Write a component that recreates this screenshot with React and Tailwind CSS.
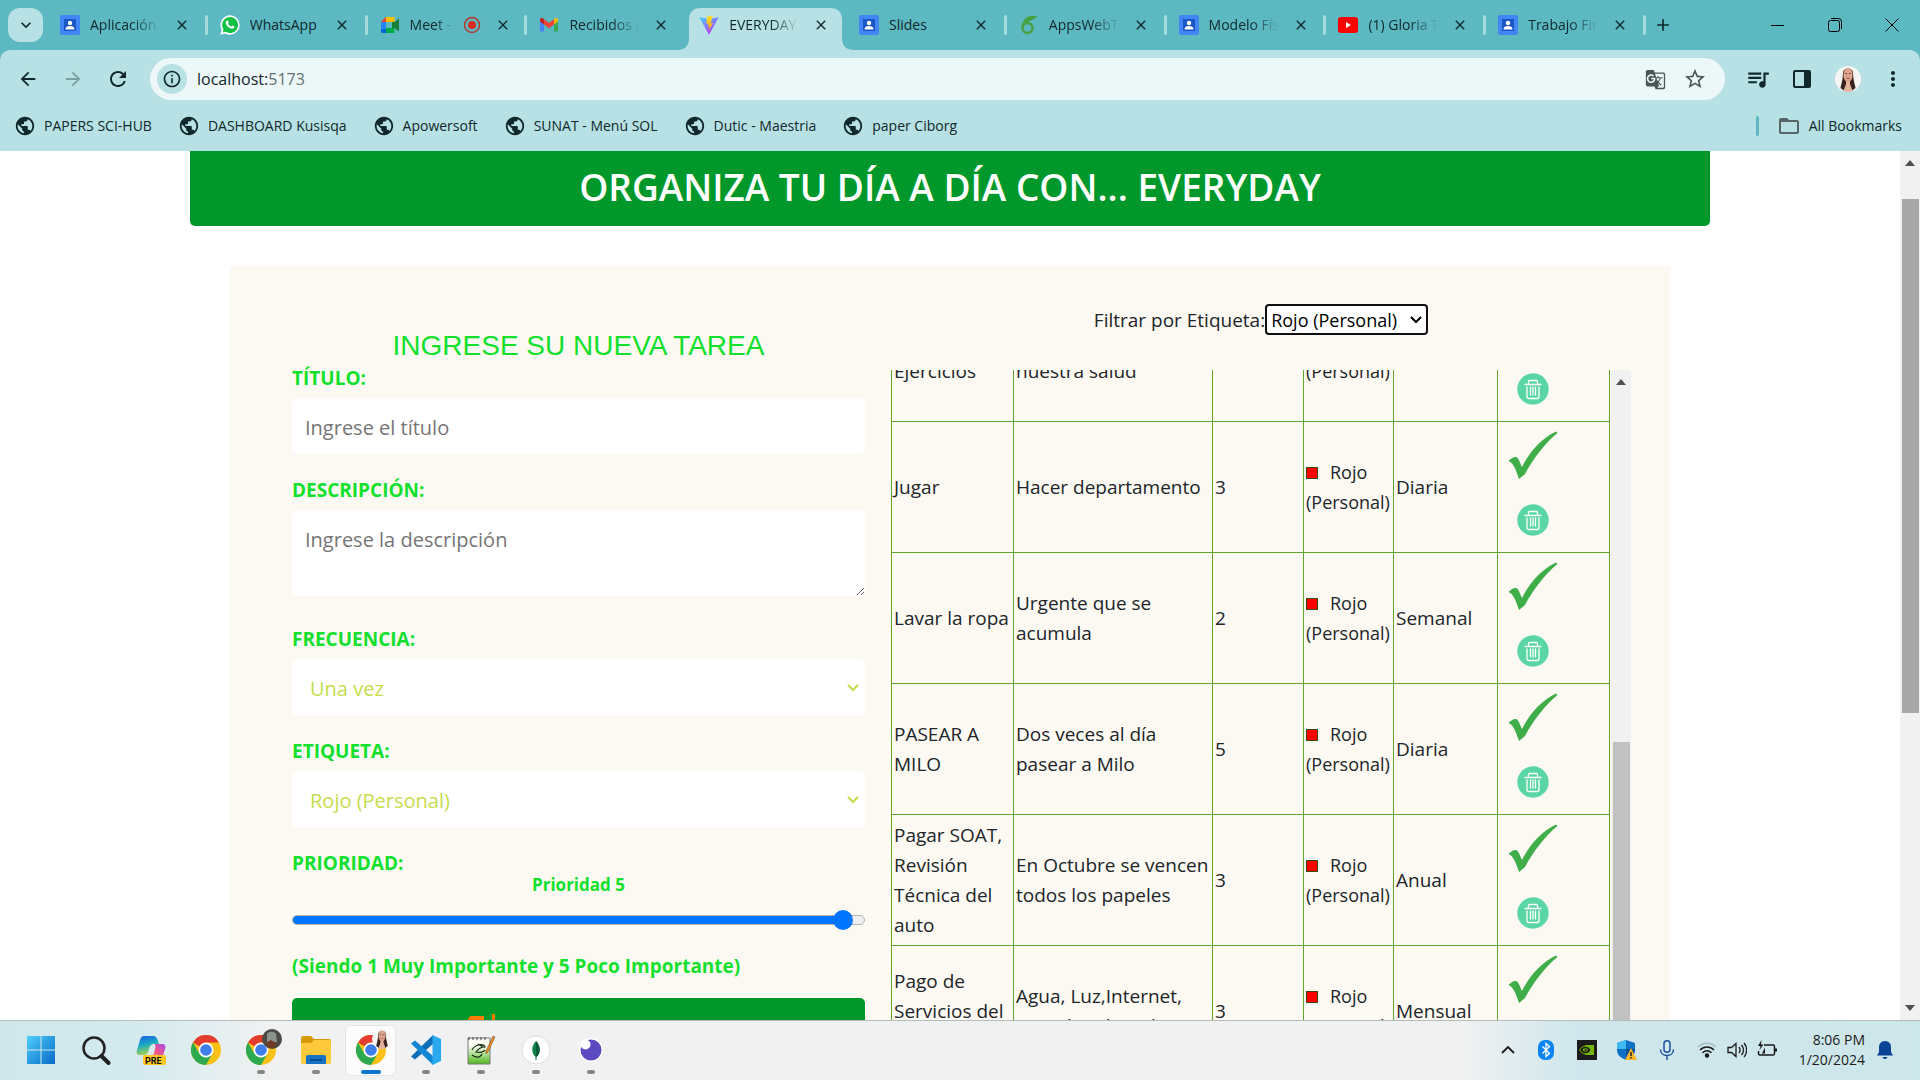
import React, { useEffect, useRef } from "react";
import {
  MdPublic, MdArrowBack, MdArrowForward, MdRefresh, MdInfoOutline, MdStarBorder,
  MdQueueMusic, MdGTranslate, MdMoreVert, MdFolderOpen, MdClose, MdAdd, MdExpandMore,
} from "react-icons/md";

const ICON = "block shrink-0";

function PersonIcon() {
  return (
    <svg viewBox="0 0 20 20" className={ICON + " size-5"}>
      <rect width="20" height="20" rx="2" fill="#4285f4" />
      <rect x="4" y="4" width="12" height="12" fill="#1a56c4" />
      <circle cx="10" cy="8" r="2.2" fill="#fff" />
      <path d="M5.5 14.5c0-2.4 2-3.4 4.5-3.4s4.5 1 4.5 3.4z" fill="#fff" />
    </svg>
  );
}

function WhatsIcon() {
  return (
    <svg viewBox="0 0 20 20" className={ICON + " size-5"}>
      <path d="M10 0.3a9.7 9.7 0 0 1 0 19.4c-1.700 0-3.200-.4-4.600-1.200L.3 19.800l1.400-5A9.700 9.700 0 0 1 10 .3z" fill="#fff" />
      <path d="M10 2a8 8 0 1 1-4.200 14.800L2.700 17.600l.9-3A8 8 0 0 1 10 2z" fill="#12c143" />
      <path d="M7.100 5.500c.4-.2.900 0 1 .4l.7 1.500c.1.300-.6 1.100-.6 1.300.6 1.300 1.700 2.300 3 2.800.3.100 1-1 1.300-.9l1.700.8c.4.3 0 1.500-.6 1.900-1.800 1.200-4.300-.1-5.700-1.500S5.200 8.300 5.800 6.800c.3-.7.800-1.200 1.300-1.300z" fill="#fff" />
    </svg>
  );
}

function MeetIcon() {
  return (
    <svg viewBox="0 0 20 20" className={ICON + " size-5"}>
      <path d="M1 7l5-5v5z" fill="#ea4335" />
      <path d="M6 2h8.500v5H6z" fill="#fbbc04" />
      <path d="M1 7h5v7H1z" fill="#2684fc" />
      <path d="M1 14h5v4H2.500A1.500 1.500 0 0 1 1 16.500z" fill="#0066da" />
      <path d="M6 13h8.500v5H6z" fill="#00ac47" />
      <path d="M12 7h2.500v6H12zM14.500 7L19 3.500v13L14.500 13z" fill="#188038" />
    </svg>
  );
}

function GmailIcon() {
  return (
    <svg viewBox="0 0 20 20" className={ICON + " size-5"}>
      <path d="M1 5v11.500h4V8.500z" fill="#4285f4" />
      <path d="M15 8.500v8h4V5z" fill="#34a853" />
      <path d="M15 4.500v5l4-3V5c0-2-2-2.300-3-1.500z" fill="#fbbc04" />
      <path d="M5 9.500l5 3.800 5-3.800V4.300L10 8 5 4.300z" fill="#ea4335" />
      <path d="M1 5v1.500l4 3V4.300L4 3.500C3 2.700 1 3 1 5z" fill="#c5221f" />
    </svg>
  );
}

function ViteIcon() {
  return (
    <svg viewBox="0 0 20 20" className={ICON + " size-5"}>
      <defs>
        <linearGradient id="viteBody" x1="0" y1="0" x2="0.600" y2="1">
          <stop offset="0" stopColor="#41d1ff" />
          <stop offset="1" stopColor="#bd34fe" />
        </linearGradient>
        <linearGradient id="viteBolt" x1="0" y1="0" x2="0" y2="1">
          <stop offset="0" stopColor="#ffdd35" />
          <stop offset="1" stopColor="#ffa800" />
        </linearGradient>
      </defs>
      <path d="M0.300 2.200L10 4l9.700-1.800L10 19.700z" fill="url(#viteBody)" />
      <path d="M14 .4L8 1.500l-.5 7.600 2.200-.5-.6 3.200 1.400-.4-.8 4.400 4.300-7.800-2.500.5z" fill="url(#viteBolt)" />
    </svg>
  );
}

function OverleafIcon() {
  return (
    <svg viewBox="0 0 20 20" className={ICON + " size-5"} fill="none" stroke="#47a141" strokeWidth="2.400">
      <circle cx="8.500" cy="13" r="5" />
      <path d="M3.500 12C4 6 9 6.500 15.500 2.200 11 1.500 6.500 3.500 5 7" />
    </svg>
  );
}

function YoutubeIcon() {
  return (
    <svg viewBox="0 0 20 20" className={ICON + " size-5"}>
      <rect y="2" width="20" height="16" rx="3" fill="#f00" />
      <path d="M8 7l5 3-5 3z" fill="#fff" />
    </svg>
  );
}

const TABS = [
  { icon: <PersonIcon />, title: "Aplicación web" },
  { icon: <WhatsIcon />, title: "WhatsApp", whole: true },
  { icon: <MeetIcon />, title: "Meet - reunión", rec: true },
  { icon: <GmailIcon />, title: "Recibidos (12)", flush: true },
  { icon: <ViteIcon />, title: "EVERYDAY", active: true },
  { icon: <PersonIcon />, title: "Slides", whole: true },
  { icon: <OverleafIcon />, title: "AppsWebTareas" },
  { icon: <PersonIcon />, title: "Modelo Físico" },
  { icon: <YoutubeIcon />, title: "(1) Gloria Trevi" },
  { icon: <PersonIcon />, title: "Trabajo Final" },
];

function Tab({ tab }) {
  return (
    <div className={"relative h-[42px] min-w-0 flex-1 " + (tab.active ? "z-10" : "")}>
      {tab.active && (
        <svg viewBox="0 0 178 42" className="absolute -left-[10px] top-0 h-[42px] w-[178px]" preserveAspectRatio="none">
          <path d="M0 42C8 42 12 38 12 30V12C12 4 16 0 24 0H153C161 0 165 4 165 12V30C165 38 169 42 177 42Z" fill="#b7e1e4" />
        </svg>
      )}
      <div className="relative flex h-[34px] items-center pl-3">
        {tab.icon}
        <span className={"ml-[10px] overflow-hidden whitespace-nowrap text-sm text-[#10282b] " + (tab.whole ? "" : "[mask-image:linear-gradient(to_right,#000_60%,transparent)] ") + (tab.rec ? "w-11" : "w-[70px]")}>
          {tab.title}
        </span>
        {tab.rec && (
          <svg viewBox="0 0 18 18" className="ml-[9px] size-[18px]">
            <circle cx="9" cy="9" r="7.500" fill="none" stroke="#b3382f" strokeWidth="1.500" />
            <circle cx="9" cy="9" r="4" fill="#d92c20" />
          </svg>
        )}
        <button aria-label="Cerrar pestaña" className="ml-[14px] grid size-4 place-items-center text-[#10282b]">
          <MdClose className="size-4" />
        </button>
        {!tab.active && !tab.flush && (
          <span className="ml-auto h-5 w-[3px] rounded bg-[#a5dbdf]" />
        )}
      </div>
    </div>
  );
}

function Avatar({ className }) {
  return (
    <svg viewBox="0 0 26 26" className={className}>
      <defs>
        <clipPath id="avatarClip"><circle cx="13" cy="13" r="13" /></clipPath>
      </defs>
      <g clipPath="url(#avatarClip)">
        <rect width="26" height="26" fill="#f7f5f4" />
        <path d="M8 7c0-6 10-6 10 0l.5 6 2 9-4 3h-7l-4-3 2-9z" fill="#3a2420" />
        <path d="M11 14h4v4l3 8H8l3-8z" fill="#e3b49e" />
        <ellipse cx="13" cy="9" rx="4.600" ry="7" fill="#dba58e" />
        <path d="M10.500 7.500h1.500M14 7.500h1.500" stroke="#5a352c" />
        <path d="M11.300 12q1.700 1 3.400 0" stroke="#b14a4a" fill="none" />
      </g>
    </svg>
  );
}

function BrowserChrome() {
  const marks = ["PAPERS SCI-HUB", "DASHBOARD Kusisqa", "Apowersoft", "SUNAT - Menú SOL", "Dutic - Maestria", "paper Ciborg"];
  return (
    <header className="shrink-0 bg-[#5cb8c1] text-[#10282b]">
      <div className="flex h-[50px] items-start pt-2">
        <button aria-label="Buscar pestañas" className="ml-2 mr-[5px] grid h-[34px] w-[35px] place-items-center rounded-xl bg-[#b7e1e4]">
          <MdExpandMore className="size-5" />
        </button>
        <div className="flex max-w-[1598px] flex-1">
          {TABS.map((t) => <Tab key={t.title} tab={t} />)}
        </div>
        <button aria-label="Nueva pestaña" className="ml-[7px] grid h-[34px] w-5 place-items-center"><MdAdd className="size-5" /></button>
        <div className="ml-auto flex h-[34px] items-center">
          <button aria-label="Minimizar" className="grid w-[57px] place-items-center"><span className="h-px w-[13px] bg-black" /></button>
          <button aria-label="Restaurar" className="grid w-[57px] place-items-center">
            <svg viewBox="0 0 14 14" className="size-[14px]" fill="none" stroke="#000"><rect x="0.500" y="2.500" width="11" height="11" rx="2" /><path d="M3 .5h7.500a3 3 0 0 1 3 3V11" /></svg>
          </button>
          <button aria-label="Cerrar" className="grid w-[57px] place-items-center">
            <svg viewBox="0 0 14 14" className="size-[14px]" stroke="#000"><path d="M.5 .5l13 13M13.500 .5l-13 13" /></svg>
          </button>
        </div>
      </div>
      <div className="flex h-[101px] flex-col rounded-t-[10px] bg-[#b7e1e4] pt-2">
        <div className="flex h-[42px] items-center pl-4 pr-[15px]">
          <button aria-label="Atrás" className="grid w-6 place-items-center"><MdArrowBack className="size-[22px]" /></button>
          <button aria-label="Adelante" className="ml-[21px] grid w-6 place-items-center text-[#7c9fa3]"><MdArrowForward className="size-[22px]" /></button>
          <button aria-label="Recargar" className="ml-[21px] grid w-6 place-items-center"><MdRefresh className="size-6" /></button>
          <div className="ml-5 flex h-[42px] flex-1 items-center rounded-full bg-[#edf7f8] pl-[7px] pr-[18px]">
            <span className="grid size-[30px] place-items-center rounded-full bg-[#b7e1e4]"><MdInfoOutline className="size-5" /></span>
            <span className="ml-[10px] flex-1 text-base">localhost:<span className="text-[#5f7173]">5173</span></span>
            <MdGTranslate className="size-[21px] text-[#4a5557]" />
            <MdStarBorder className="ml-[17px] size-6 text-[#4a5557]" />
          </div>
          <MdQueueMusic className="ml-5 size-[26px]" />
          <svg viewBox="0 0 20 20" className="ml-[21px] size-5"><path d="M3 1h14a2 2 0 0 1 2 2v14a2 2 0 0 1-2 2H3a2 2 0 0 1-2-2V3a2 2 0 0 1 2-2zM3 3v14h9V3z" fillRule="evenodd" fill="#10282b" /></svg>
          <Avatar className="ml-[23px] size-[26px]" />
          <MdMoreVert className="ml-5 size-6" />
        </div>
        <nav className="flex h-[51px] items-center pl-[14px] pr-[18px] text-sm">
          {marks.map((m) => (
            <a key={m} href="#" className="mr-[26px] flex items-center gap-2 whitespace-nowrap">
              <MdPublic className="size-[22px]" />{m}
            </a>
          ))}
          <span className="ml-auto h-5 w-[3px] rounded bg-[#5cb8c1]" />
          <a href="#" className="ml-[18px] flex items-center gap-2 whitespace-nowrap"><MdFolderOpen className="size-6 text-[#566]" />All Bookmarks</a>
        </nav>
      </div>
    </header>
  );
}

function CheckMark() {
  return (
    <svg viewBox="0 0 50 50" className="block size-[50px]">
      <path d="M0.500 30C3 27 7 25 9 26.500 11 28 12.500 33 14 36 22 20 34 7 48 .5L49.500 2C37 12 25 28 17 43L11 48C9 42 6 32 0.500 30z" fill="#3fae49" />
    </svg>
  );
}

function TrashIcon() {
  return (
    <svg viewBox="0 0 32 32" className="block size-8">
      <circle cx="16" cy="16" r="15.700" fill="#5ad6a5" />
      <g fill="none" stroke="#fff" strokeWidth="1.300">
        <path d="M7.500 11.500h17M11.500 11V8.500a1 1 0 0 1 1-1h7a1 1 0 0 1 1 1V11M10 13.500v10a2 2 0 0 0 2 2h8a2 2 0 0 0 2-2v-10M13.500 13.500v9M16 13.500v9M18.500 13.500v9" />
      </g>
    </svg>
  );
}

const TASKS = [
  ["Hacer Ejercicios", "Cuidemos siempre nuestra salud", 4, "Diaria"],
  ["Jugar", "Hacer departamento", 3, "Diaria"],
  ["Lavar la ropa", "Urgente que se acumula", 2, "Semanal"],
  ["PASEAR A MILO", "Dos veces al día pasear a Milo", 5, "Diaria"],
  ["Pagar SOAT, Revisión Técnica del auto", "En Octubre se vencen todos los papeles", 3, "Anual"],
  ["Pago de Servicios del hogar", "Agua, Luz,Internet, cancelar el total", 3, "Mensual"],
];

function TaskTable() {
  const ref = useRef(null);
  useEffect(() => { ref.current.scrollTop = 80; }, []);
  const cell = "border border-[#5fa32b] px-[2px] align-middle";
  return (
    <div className="flex h-[690px]">
      <div ref={ref} className="flex-1 overflow-hidden pr-px">
        <table className="w-full table-fixed border-collapse">
          <colgroup>
            <col className="w-[122px]" /><col className="w-[199px]" /><col className="w-[91px]" />
            <col className="w-[90px]" /><col className="w-[104px]" /><col className="w-[112px]" />
          </colgroup>
          <tbody>
            {TASKS.map(([name, desc, prio, freq]) => (
              <tr key={name} className="h-[131px]">
                <td className={cell}>{name}</td>
                <td className={cell}>{desc}</td>
                <td className={cell}>{prio}</td>
                <td className={cell + " text-lg leading-[30px]"}>
                  <span className="mr-3 inline-block size-3 border border-[#3c4a10] bg-[#f00]" />Rojo (Personal)
                </td>
                <td className={cell}>{freq}</td>
                <td className={cell}>
                  <div className="flex w-[66px] flex-col items-center gap-[23px] pb-2">
                    <button aria-label="Completar tarea"><CheckMark /></button>
                    <button aria-label="Eliminar tarea"><TrashIcon /></button>
                  </div>
                </td>
              </tr>
            ))}
          </tbody>
        </table>
      </div>
      <div className="flex w-5 flex-col items-center bg-[#f1f1f1]">
        <span className="mt-[9px] border-x-[5px] border-b-[6px] border-x-transparent border-b-[#505050]" />
        <span className="mt-[357px] w-[17px] flex-1 bg-[#c1c1c1]" />
      </div>
    </div>
  );
}

const LABEL = "block text-[19px] leading-[30px] font-bold text-[#12e02d]";
const FIELD = "block w-full rounded-[5px] bg-white font-['Comic_Sans_MS','Open_Sans',sans-serif] text-xl";

function SelectField({ id, label, options, className }) {
  return (
    <div className={className}>
      <label htmlFor={id} className={LABEL}>{label}</label>
      <div className="relative mt-[5px]">
        <select id={id} className={FIELD + " h-14 appearance-none pl-[18px] pt-[3px] text-[#c5dd4c]"}>
          {options.map((o) => <option key={o}>{o}</option>)}
        </select>
        <svg viewBox="0 0 12 8" className="pointer-events-none absolute right-[6px] top-[25px] h-2 w-3"><path d="M1 1l5 5 5-5" fill="none" stroke="#c5dd4c" strokeWidth="2" /></svg>
      </div>
    </div>
  );
}

function TaskForm() {
  return (
    <form className="pt-[62px]">
      <h2 className="text-center font-['Liberation_Sans',Arial,sans-serif] text-[28px] leading-[35px] text-[#12e02d]">INGRESE SU NUEVA TAREA</h2>
      <label htmlFor="titulo" className={LABEL}>TÍTULO:</label>
      <input id="titulo" placeholder="Ingrese el título" className={FIELD + " mt-[5px] h-14 px-[13px] pt-[2px] placeholder:text-[#757575]"} />
      <label htmlFor="desc" className={LABEL + " mt-[21px]"}>DESCRIPCIÓN:</label>
      <textarea id="desc" placeholder="Ingrese la descripción" className={FIELD + " mt-[5px] h-[86px] px-[13px] py-[15px] leading-[30px] placeholder:text-[#757575]"} />
      <SelectField id="frec" label="FRECUENCIA:" options={["Una vez", "Diaria", "Semanal", "Mensual", "Anual"]} className="mt-[28px]" />
      <SelectField id="etiq" label="ETIQUETA:" options={["Rojo (Personal)"]} className="mt-[21px]" />
      <label htmlFor="prio" className={LABEL + " mt-[21px]"}>PRIORIDAD:</label>
      <output htmlFor="prio" className="-mt-2 block text-center text-[17px] leading-[30px] font-bold text-[#12e02d]">Prioridad 5</output>
      <div className="relative mt-[10px] h-5">
        <input id="prio" type="range" min="0" max="100" defaultValue="98" className="absolute inset-0 m-0 w-full appearance-none bg-transparent [&::-webkit-slider-runnable-track]:h-[10px] [&::-webkit-slider-runnable-track]:rounded-full [&::-webkit-slider-runnable-track]:border [&::-webkit-slider-runnable-track]:border-[#b2b2b2] [&::-webkit-slider-runnable-track]:bg-[linear-gradient(to_right,#0075ff_96%,#efefef_96%)] [&::-webkit-slider-thumb]:-mt-[6px] [&::-webkit-slider-thumb]:size-5 [&::-webkit-slider-thumb]:appearance-none [&::-webkit-slider-thumb]:rounded-full [&::-webkit-slider-thumb]:bg-[#0075ff]" />
      </div>
      <p className={LABEL + " mt-[21px]"}>(Siendo 1 Muy Importante y 5 Poco Importante)</p>
      <button type="button" className="mt-[17px] flex h-[70px] w-full items-start gap-2 rounded-[5px] bg-[#00982b] pl-[172px] pt-4 text-xl text-white">
        <svg viewBox="0 0 40 40" className="size-10" fill="#ff7a00"><path d="M6 2h14v8h-7v26H0V12z" /><path d="M28 0h3v37h-3z" /></svg>
        <span className="pt-3">Agregar Tarea</span>
      </button>
    </form>
  );
}

function Page() {
  return (
    <main className="flex min-h-0 flex-1 overflow-hidden bg-white text-[#212529]">
      <div className="min-w-0 flex-1 text-[19px] leading-[30px]">
        <h1 className="mx-auto flex h-[75px] w-4/5 items-center justify-center rounded-b-[5px] bg-[#00982b] pb-[3px] text-[37px] font-semibold text-white">
          ORGANIZA TU DÍA A DÍA CON... EVERYDAY
        </h1>
        <section className="mx-auto mt-10 grid w-full max-w-[1440px] grid-cols-[575fr_738fr] gap-x-[26px] rounded-[3px] bg-[#fcf9f2] pl-[62px] pr-[39px]">
          <TaskForm />
          <div className="pt-[38px]">
            <div className="mb-[35px] flex h-[31px] items-center justify-center">
              <label htmlFor="filtro">Filtrar por Etiqueta:</label>
              <span className="relative">
                <select id="filtro" className="block h-[31px] w-[163px] appearance-none rounded-[4px] border-2 border-[#101010] bg-white pl-[4px] pt-[2px] text-lg leading-[25px] text-black">
                  <option>Rojo (Personal)</option>
                </select>
                <svg viewBox="0 0 12 8" className="pointer-events-none absolute right-[6px] top-[12px] h-2 w-3"><path d="M1 1l5 5 5-5" fill="none" stroke="#000" strokeWidth="2" /></svg>
              </span>
            </div>
            <TaskTable />
          </div>
        </section>
      </div>
      <div className="flex w-5 shrink-0 flex-col items-center bg-[#f1f1f1]">
        <span className="mt-[9px] border-x-[5px] border-b-[6px] border-x-transparent border-b-[#505050]" />
        <span className="mt-[33px] h-[514px] w-[17px] bg-[#a8a8a8]" />
        <span className="mb-[9px] mt-auto border-x-[5px] border-t-[6px] border-x-transparent border-t-[#505050]" />
      </div>
    </main>
  );
}

function ChromeLogo() {
  return (
    <svg viewBox="0 0 30 30" className="size-[30px]">
      <circle cx="15" cy="15" r="15" fill="#fbc116" />
      <path d="M15 15L2 7.500A15 15 0 0 1 28 7.500H15z" fill="#e33b2e" />
      <path d="M2 7.500A15 15 0 0 0 15 30L21.500 18.700 15 22.500 8.500 18.700z" fill="#2da94f" />
      <circle cx="15" cy="15" r="7.500" fill="#fff" />
      <circle cx="15" cy="15" r="5.800" fill="#3f7de8" />
    </svg>
  );
}

const APPS = [
  { name: "Inicio", art: (
    <svg viewBox="0 0 30 30" className="size-[30px]"><defs><linearGradient id="winBlue" x1="0" y1="0" x2="1" y2="1"><stop offset="0" stopColor="#4fd0fa" /><stop offset="1" stopColor="#0669c9" /></linearGradient></defs><path d="M1 1h13.500v13.500H1zM15.500 1H29v13.500H15.500zM1 15.500h13.500V29H1zM15.500 15.500H29V29H15.500z" fill="url(#winBlue)" /></svg>) },
  { name: "Buscar", art: (
    <svg viewBox="0 0 30 30" className="size-[30px]" fill="none" stroke="#222"><circle cx="13" cy="13" r="10.500" strokeWidth="2.500" /><path d="M20.500 21l7 7" strokeWidth="4" strokeLinecap="round" /></svg>) },
  { name: "Copilot", art: (
    <svg viewBox="0 0 30 30" className="size-[30px]">
      <defs>
        <linearGradient id="cpA" x1="0" y1="0" x2="0.300" y2="1"><stop offset="0" stopColor="#1a56e0" /><stop offset=".5" stopColor="#18a8c8" /><stop offset="1" stopColor="#a6d34c" /></linearGradient>
        <linearGradient id="cpB" x1="1" y1="0" x2="0" y2="1"><stop offset="0" stopColor="#a24be8" /><stop offset=".5" stopColor="#f0568e" /><stop offset="1" stopColor="#f9a35a" /></linearGradient>
      </defs>
      <path d="M8 1h9c3 0 4 2 5 5l1 3h-5c-3 0-4 2-5 5l-1 3c-1 2-2 3-4 3H4c-3 0-4-2-3-5L4 5c1-3 2-4 4-4z" fill="url(#cpA)" />
      <path d="M18 9h8c3 0 4 2 3 5l-2 7c-1 3-2 4-4 4h-9c2 0 2-2 3-4l2-7c1-3 0-5-1-5z" fill="url(#cpB)" />
      <rect x="7" y="20" width="23" height="10" rx="2" fill="#ffc81e" />
      <text x="9" y="28.500" fontSize="9" fontWeight="700" fontFamily="Roboto, sans-serif" fill="#111">PRE</text>
    </svg>) },
  { name: "Chrome", art: <ChromeLogo /> },
  { name: "Chrome perfil", dot: true, art: (
    <span className="relative block"><ChromeLogo />
      <svg viewBox="0 0 20 20" className="absolute -right-[6px] -top-[6px] size-5"><circle cx="10" cy="10" r="10" fill="#4b4a47" /><path d="M5 5c2-3 7-3 9 0l1 8H5z" fill="#8d9490" /><path d="M3 14l6-3 6 4-3 4H7z" fill="#6e3b25" /></svg>
    </span>) },
  { name: "Explorador", dot: true, art: (
    <svg viewBox="0 0 30 30" className="size-[30px]"><path d="M0 3a2 2 0 0 1 2-2h8l3 3h15a2 2 0 0 1 2 2v6H0z" fill="#d99a09" /><path d="M0 8h10l3-3h15a2 2 0 0 1 2 2v20a2 2 0 0 1-2 2H2a2 2 0 0 1-2-2z" fill="#fcca3c" /><path d="M5 29v-7a2 2 0 0 1 2-2h16a2 2 0 0 1 2 2v7z" fill="#1673c7" /><path d="M9 24h12v2H9z" fill="#0b4f93" /></svg>) },
  { name: "Chrome activo", active: true, art: <span className="relative block"><ChromeLogo /><Avatar className="absolute -right-[6px] -top-[6px] size-5" /></span> },
  { name: "Visual Studio Code", dot: true, art: (
    <svg viewBox="0 0 30 30" className="size-[30px]"><path d="M22 0v9L4 24.500 0 21.500z" fill="#0d6fb8" /><path d="M22 30v-9L4 5.500 0 8.500z" fill="#1487d4" /><path d="M21.500 0L30 4v22l-8.500 4z" fill="#2aa9ef" /></svg>) },
  { name: "Notepad++", dot: true, art: (
    <svg viewBox="0 0 30 30" className="size-[30px]"><defs><linearGradient id="npp" x1="0" y1="0" x2="0" y2="1"><stop offset=".3" stopColor="#fbfcf4" /><stop offset="1" stopColor="#4fb81c" /></linearGradient></defs><path d="M2 3h22v26H2z" fill="url(#npp)" stroke="#777" /><path d="M3 2v3M7 2v3M11 2v3M15 2v3M19 2v3" stroke="#444" /><path d="M6 15c3-6 12-7 13-3-5 0-7 2-9 5 4 1 8 0 9-2M6 20c4 3 8 3 10-1M12 9l5 3" stroke="#1c2e14" strokeWidth="1.200" fill="none" /><path d="M27 1l2 1-7 15-2 2v-3z" fill="#e8912a" stroke="#6b3a12" strokeWidth=".5" /></svg>) },
  { name: "MongoDB Compass", dot: true, art: (
    <svg viewBox="0 0 30 30" className="size-[30px]"><circle cx="15" cy="15" r="14" fill="#fff" stroke="#ddd" /><path d="M15 6c5 5 5 13 0 16-5-3-5-11 0-16z" fill="#10804a" /><path d="M15 6c5 5 5 13 0 16z" fill="#0a5c38" /><path d="M15 20v5" stroke="#0a5c38" /></svg>) },
  { name: "Insomnia", dot: true, art: (
    <svg viewBox="0 0 30 30" className="size-[30px]"><circle cx="15" cy="15" r="12" fill="#fff" /><circle cx="15" cy="15" r="10.500" fill="#5c4bc0" /><circle cx="9.500" cy="9.500" r="5" fill="#fff" /></svg>) },
];

function Taskbar() {
  return (
    <footer className="flex h-[60px] shrink-0 items-center border-t border-[#b4bcbd] bg-[linear-gradient(to_right,#cfe7ec_0%,#d3eaee_7%,#f0f1f2_14%,#f1f1f1_76%,#cfe7ec_82%,#cde6ea_100%)] pl-[13px] pr-[27px] text-[#1b1b1b]">
      {APPS.map((a) => (
        <button key={a.name} aria-label={a.name} className="relative grid h-full w-[55px] place-items-center pb-[2px]">
          {a.active && <span className="absolute inset-x-[3px] inset-y-[5px] rounded-[5px] bg-white/80 ring-1 ring-black/5" />}
          <span className="relative">{a.art}</span>
          {a.dot && <span className="absolute bottom-[6px] h-1 w-2 rounded-full bg-[#868686]" />}
          {a.active && <span className="absolute bottom-[6px] h-1 w-5 rounded-full bg-[#0a77cf]" />}
        </button>
      ))}
      <div className="ml-auto flex items-center pb-[2px]">
        <svg viewBox="0 0 14 8" className="mr-[22px] h-2 w-[14px]" fill="none" stroke="#1b1b1b" strokeWidth="1.800"><path d="M1 7l6-6 6 6" /></svg>
        <svg viewBox="0 0 18 20" className="mr-[22px] h-5 w-[18px]"><rect x="1" width="16" height="20" rx="7" fill="#0a84f5" /><path d="M5.500 6.500l7 7L9 16.500v-13l3.500 3-7 7" stroke="#fff" strokeWidth="1.300" fill="none" /></svg>
        <svg viewBox="0 0 20 20" className="mr-[20px] size-5"><rect width="20" height="20" fill="#1c1c1c" /><path d="M8 5h9v10H8z" fill="#76b900" /><path d="M2.500 10c3-5 9-5 11.500 0-3 5-8.500 5-11.500 0z" fill="#1c1c1c" stroke="#76b900" /><path d="M5 10c2-3 5-3 6.500 0-2 3-5 2.500-6.500 0z" fill="#76b900" stroke="#1c1c1c" /><circle cx="8.500" cy="10" r="1" fill="#1c1c1c" /></svg>
        <svg viewBox="0 0 20 20" className="mr-[20px] size-5"><path d="M9 0l9 3v7c0 5-4 8-9 10C4 18 0 15 0 10V3z" fill="#0f6fc6" /><path d="M9 0v9H0V3z" fill="#3fb9f2" /><path d="M9 9h9c0 5-4 9-9 11z" fill="#0a4f96" /><path d="M14 8l6 12H8z" fill="#fbb829" /><path d="M14 12v4M14 17v1.500" stroke="#222" strokeWidth="1.500" /></svg>
        <svg viewBox="0 0 20 20" className="mr-[20px] size-5" fill="none" stroke="#1e4f9c" strokeWidth="1.500"><rect x="7" y=".8" width="6" height="11.500" rx="3" /><path d="M3.500 9.500c0 8 13 8 13 0M10 15.500V20" /></svg>
        <svg viewBox="0 0 20 20" className="mr-[10px] size-5" fill="none" stroke="#1b1b1b" strokeWidth="1.500"><path d="M1 7c5-5 13-5 18 0" stroke="#a9babd" /><path d="M3 10c4-4 10-4 14 0M5.500 12.700c3-2.700 6-2.700 9 0" /><circle cx="10" cy="15.500" r="1.500" fill="#1b1b1b" /></svg>
        <svg viewBox="0 0 20 20" className="mr-[10px] size-5" fill="none" stroke="#1b1b1b" strokeWidth="1.300"><path d="M1 7.500h3.500L9 3.500v13l-4.500-4H1zM12 7c1.500 2 1.500 4 0 6M14.500 5c2.500 3 2.500 7 0 10M17 3c3.500 4 3.500 10 0 14" /></svg>
        <svg viewBox="0 0 20 20" className="mr-[22px] size-5" fill="none" stroke="#1b1b1b" strokeWidth="1.500"><path d="M7 5h9a1.500 1.500 0 0 1 1.500 1.500v7A1.500 1.500 0 0 1 16 15H3a1.500 1.500 0 0 1-1.500-1.500V11" /><path d="M19 8.500v3" strokeWidth="2" /><path d="M4.500 0L1 6h2.500L2.500 10l4-5.500H4zM3 13.500h2l3-6v6z" fill="#1b1b1b" stroke="none" /></svg>
        <time className="mr-[12px] text-right text-sm leading-5">8:06 PM<br />1/20/2024</time>
        <svg viewBox="0 0 16 20" className="h-5 w-4" fill="#0a4595"><path d="M8 1c4 0 6 3 6 6v5l2 3.500H0L2 12V7c0-3 2-6 6-6zM5.500 17h5c-.5 2.500-4.500 2.500-5 0z" /></svg>
      </div>
    </footer>
  );
}

export default function App() {
  return (
    <div className="flex h-screen flex-col overflow-hidden font-['Open_Sans','Noto_Sans',sans-serif]">
      <BrowserChrome />
      <Page />
      <Taskbar />
    </div>
  );
}
